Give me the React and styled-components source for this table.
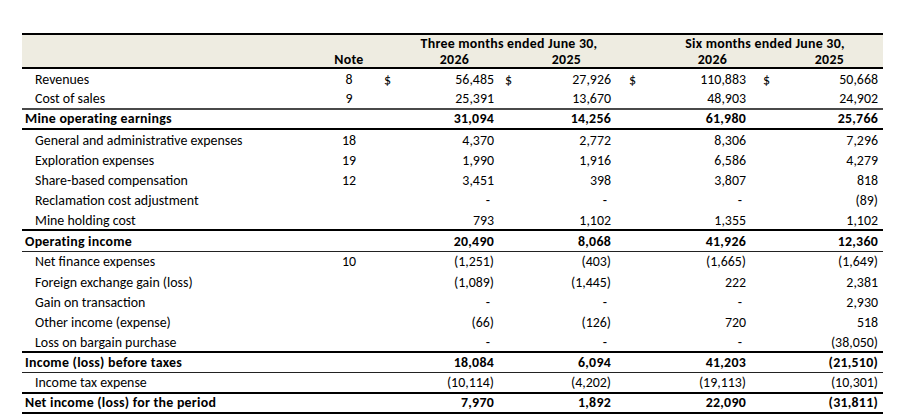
import React from 'react';
import styled, { createGlobalStyle } from 'styled-components';

const GlobalStyle = createGlobalStyle`
  html, body {
    margin: 0;
    padding: 0;
    background: #ffffff;
  }
  body {
    font-family: Carlito, Lato, "Liberation Sans", sans-serif;
    color: #000000;
  }
`;

const COLUMNS = '298px 58px 116px 117px 135px 132px';

const Page = styled.div`
  width: 906px;
  height: 418px;
  padding: 33px 0 0 22px;
  box-sizing: border-box;
  overflow: hidden;
`;

const Table = styled.div`
  width: 861px;
  font-size: 13.9px;
`;

const Header = styled.div`
  display: grid;
  grid-template-columns: ${COLUMNS};
  grid-template-rows: 16px 16px;
  background: #eeece1;
  border-top: 2px solid #000;
  border-bottom: 2px solid #000;
  font-weight: 700;
  letter-spacing: 0.25px;
  padding-right: 5px;
`;

const HeadCell = styled.div`
  display: flex;
  align-items: center;
  justify-content: ${p => p.$align || 'flex-end'};
  grid-column: ${p => p.$col} / span ${p => p.$span || 1};
  grid-row: ${p => p.$row};
  padding-left: ${p => p.$left || 0}px;
  padding-right: ${p => p.$right || 0}px;
  white-space: nowrap;
`;

const Row = styled.div`
  display: grid;
  grid-template-columns: ${COLUMNS};
  height: 20.3px;
  box-sizing: border-box;
  align-items: center;
  padding-right: 5px;
  font-weight: ${p => (p.$bold ? 700 : 400)};
  letter-spacing: ${p => (p.$bold ? '0.25px' : 'normal')};
  border-bottom: ${p => p.$border || 'none'};
`;

const Label = styled.div`
  padding-left: ${p => (p.$indent ? 13 : 3)}px;
  white-space: nowrap;
`;

const Note = styled.div`
  text-align: center;
`;

const ValueCell = styled.div`
  display: flex;
  justify-content: space-between;
  padding-left: ${p => p.$dollarPad}px;
`;

const Amount = styled.span`
  padding-right: ${p => (p.$dash ? 4 : 0)}px;
`;

const dollarPads = [6, 11, 18, 17];

const lines = {
  grey: '2px solid #4a4a4a',
  heavy: '2px solid #000',
  thin: '1px solid #222',
};

const rows = [
  { label: 'Revenues', note: '8', values: ['56,485', '27,926', '110,883', '50,668'], dollars: true },
  { label: 'Cost of sales', note: '9', values: ['25,391', '13,670', '48,903', '24,902'], border: lines.grey },
  { label: 'Mine operating earnings', bold: true, values: ['31,094', '14,256', '61,980', '25,766'], border: lines.heavy },
  { label: 'General and administrative expenses', note: '18', values: ['4,370', '2,772', '8,306', '7,296'] },
  { label: 'Exploration expenses', note: '19', values: ['1,990', '1,916', '6,586', '4,279'] },
  { label: 'Share-based compensation', note: '12', values: ['3,451', '398', '3,807', '818'] },
  { label: 'Reclamation cost adjustment', values: ['-', '-', '-', '(89)'] },
  { label: 'Mine holding cost', values: ['793', '1,102', '1,355', '1,102'], border: lines.heavy },
  { label: 'Operating income', bold: true, values: ['20,490', '8,068', '41,926', '12,360'], border: lines.thin },
  { label: 'Net finance expenses', note: '10', values: ['(1,251)', '(403)', '(1,665)', '(1,649)'] },
  { label: 'Foreign exchange gain (loss)', values: ['(1,089)', '(1,445)', '222', '2,381'] },
  { label: 'Gain on transaction', values: ['-', '-', '-', '2,930'] },
  { label: 'Other income (expense)', values: ['(66)', '(126)', '720', '518'] },
  { label: 'Loss on bargain purchase', values: ['-', '-', '-', '(38,050)'], border: lines.heavy },
  { label: 'Income (loss) before taxes', bold: true, values: ['18,084', '6,094', '41,203', '(21,510)'], border: lines.thin },
  { label: 'Income tax expense', values: ['(10,114)', '(4,202)', '(19,113)', '(10,301)'], border: lines.heavy },
  { label: 'Net income (loss) for the period', bold: true, values: ['7,970', '1,892', '22,090', '(31,811)'], border: lines.heavy },
];

const years = [
  { text: '2026', right: 25 },
  { text: '2025', right: 30 },
  { text: '2026', right: 19 },
  { text: '2025', right: 34 },
];

export default function App() {
  return (
    <Page>
      <GlobalStyle />
      <Table>
        <Header>
          <HeadCell $col={3} $span={2} $row={1} $align="center" $left={29}>
            Three months ended June 30,
          </HeadCell>
          <HeadCell $col={5} $span={2} $row={1} $align="center" $left={41}>
            Six months ended June 30,
          </HeadCell>
          <HeadCell $col={2} $row={2} $align="center">Note</HeadCell>
          {years.map((y, i) => (
            <HeadCell key={i} $col={3 + i} $row={2} $right={y.right}>
              {y.text}
            </HeadCell>
          ))}
        </Header>
        {rows.map(row => (
          <Row key={row.label} $bold={row.bold} $border={row.border}>
            <Label $indent={!row.bold}>{row.label}</Label>
            <Note>{row.note || ''}</Note>
            {row.values.map((v, i) => (
              <ValueCell key={i} $dollarPad={dollarPads[i]}>
                <span>{row.dollars ? '$' : ''}</span>
                <Amount $dash={v === '-'}>{v}</Amount>
              </ValueCell>
            ))}
          </Row>
        ))}
      </Table>
    </Page>
  );
}
